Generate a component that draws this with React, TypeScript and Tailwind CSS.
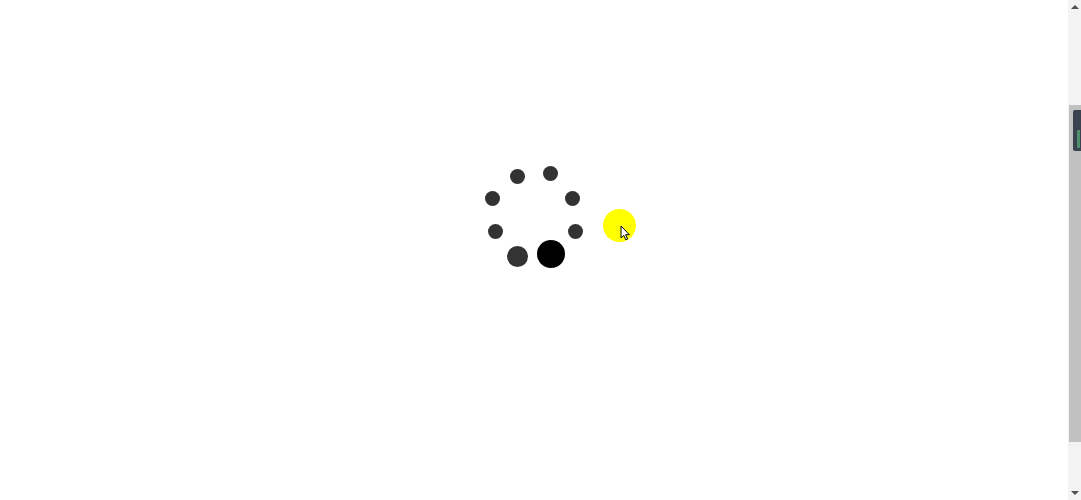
import React from 'react';

interface Dot {
  x: string;
  y: string;
  size: string;
  color: string;
}

// spinner dots, placed by their spot on the canvas
const dots: Dot[] = [
  { x: 'left-[510px]', y: 'top-[169px]', size: 'w-[15px] h-[15px]', color: 'bg-[#333333]' },
  { x: 'left-[543px]', y: 'top-[166px]', size: 'w-[15px] h-[15px]', color: 'bg-[#333333]' },
  { x: 'left-[565px]', y: 'top-[191px]', size: 'w-[15px] h-[15px]', color: 'bg-[#333333]' },
  { x: 'left-[568px]', y: 'top-[224px]', size: 'w-[15px] h-[15px]', color: 'bg-[#333333]' },
  { x: 'left-[537px]', y: 'top-[240px]', size: 'w-[28px] h-[28px]', color: 'bg-black' },
  { x: 'left-[507px]', y: 'top-[246px]', size: 'w-[21px] h-[21px]', color: 'bg-[#333333]' },
  { x: 'left-[488px]', y: 'top-[224px]', size: 'w-[15px] h-[15px]', color: 'bg-[#333333]' },
  { x: 'left-[485px]', y: 'top-[191px]', size: 'w-[15px] h-[15px]', color: 'bg-[#333333]' },
];

const Cursor: React.FC = () => (
  <svg width="11" height="16" viewBox="0 0 11 16" className="absolute left-[620px] top-[225px]">
    <path
      d="M1 1 L1 13 L3.8 10.4 L5.8 14.8 L7.6 14 L5.6 9.7 L9.4 9.7 Z"
      fill="white"
      stroke="black"
      strokeWidth="1"
      strokeLinejoin="round"
    />
  </svg>
);

const Scrollbar: React.FC = () => (
  <div className="w-[13px] h-full bg-[#f3f3f3] flex flex-col">
    <div className="h-[14px] flex items-center justify-center">
      <div className="w-0 h-0 border-l-[4px] border-r-[4px] border-b-[4px] border-l-transparent border-r-transparent border-b-[#505050]" />
    </div>
    <div className="h-[91px]" />
    <div className="relative h-[337px] ml-[1px] bg-[#c1c1c1]">
      <div className="absolute right-0 top-[5px] w-[8px] h-[41px] rounded-l-[2px] bg-[#3a4250] flex flex-col justify-end items-end pb-[3px] pr-[1px]">
        <div className="w-[3px] h-[18px] bg-[#4f8f70]" />
      </div>
    </div>
    <div className="flex-1" />
    <div className="h-[14px] flex items-center justify-center">
      <div className="w-0 h-0 border-l-[4px] border-r-[4px] border-t-[4px] border-l-transparent border-r-transparent border-t-[#505050]" />
    </div>
  </div>
);

export default function App() {
  return (
    <div className="w-[1081px] h-[500px] flex bg-white overflow-hidden">
      <div className="relative flex-1 h-full">
        {dots.map((d, i) => (
          <div key={i} className={`absolute rounded-full ${d.x} ${d.y} ${d.size} ${d.color}`} />
        ))}
        <div className="absolute left-[603px] top-[209px] w-[33px] h-[33px] rounded-full bg-[#ffff00]" />
        <Cursor />
      </div>
      <Scrollbar />
    </div>
  );
}
